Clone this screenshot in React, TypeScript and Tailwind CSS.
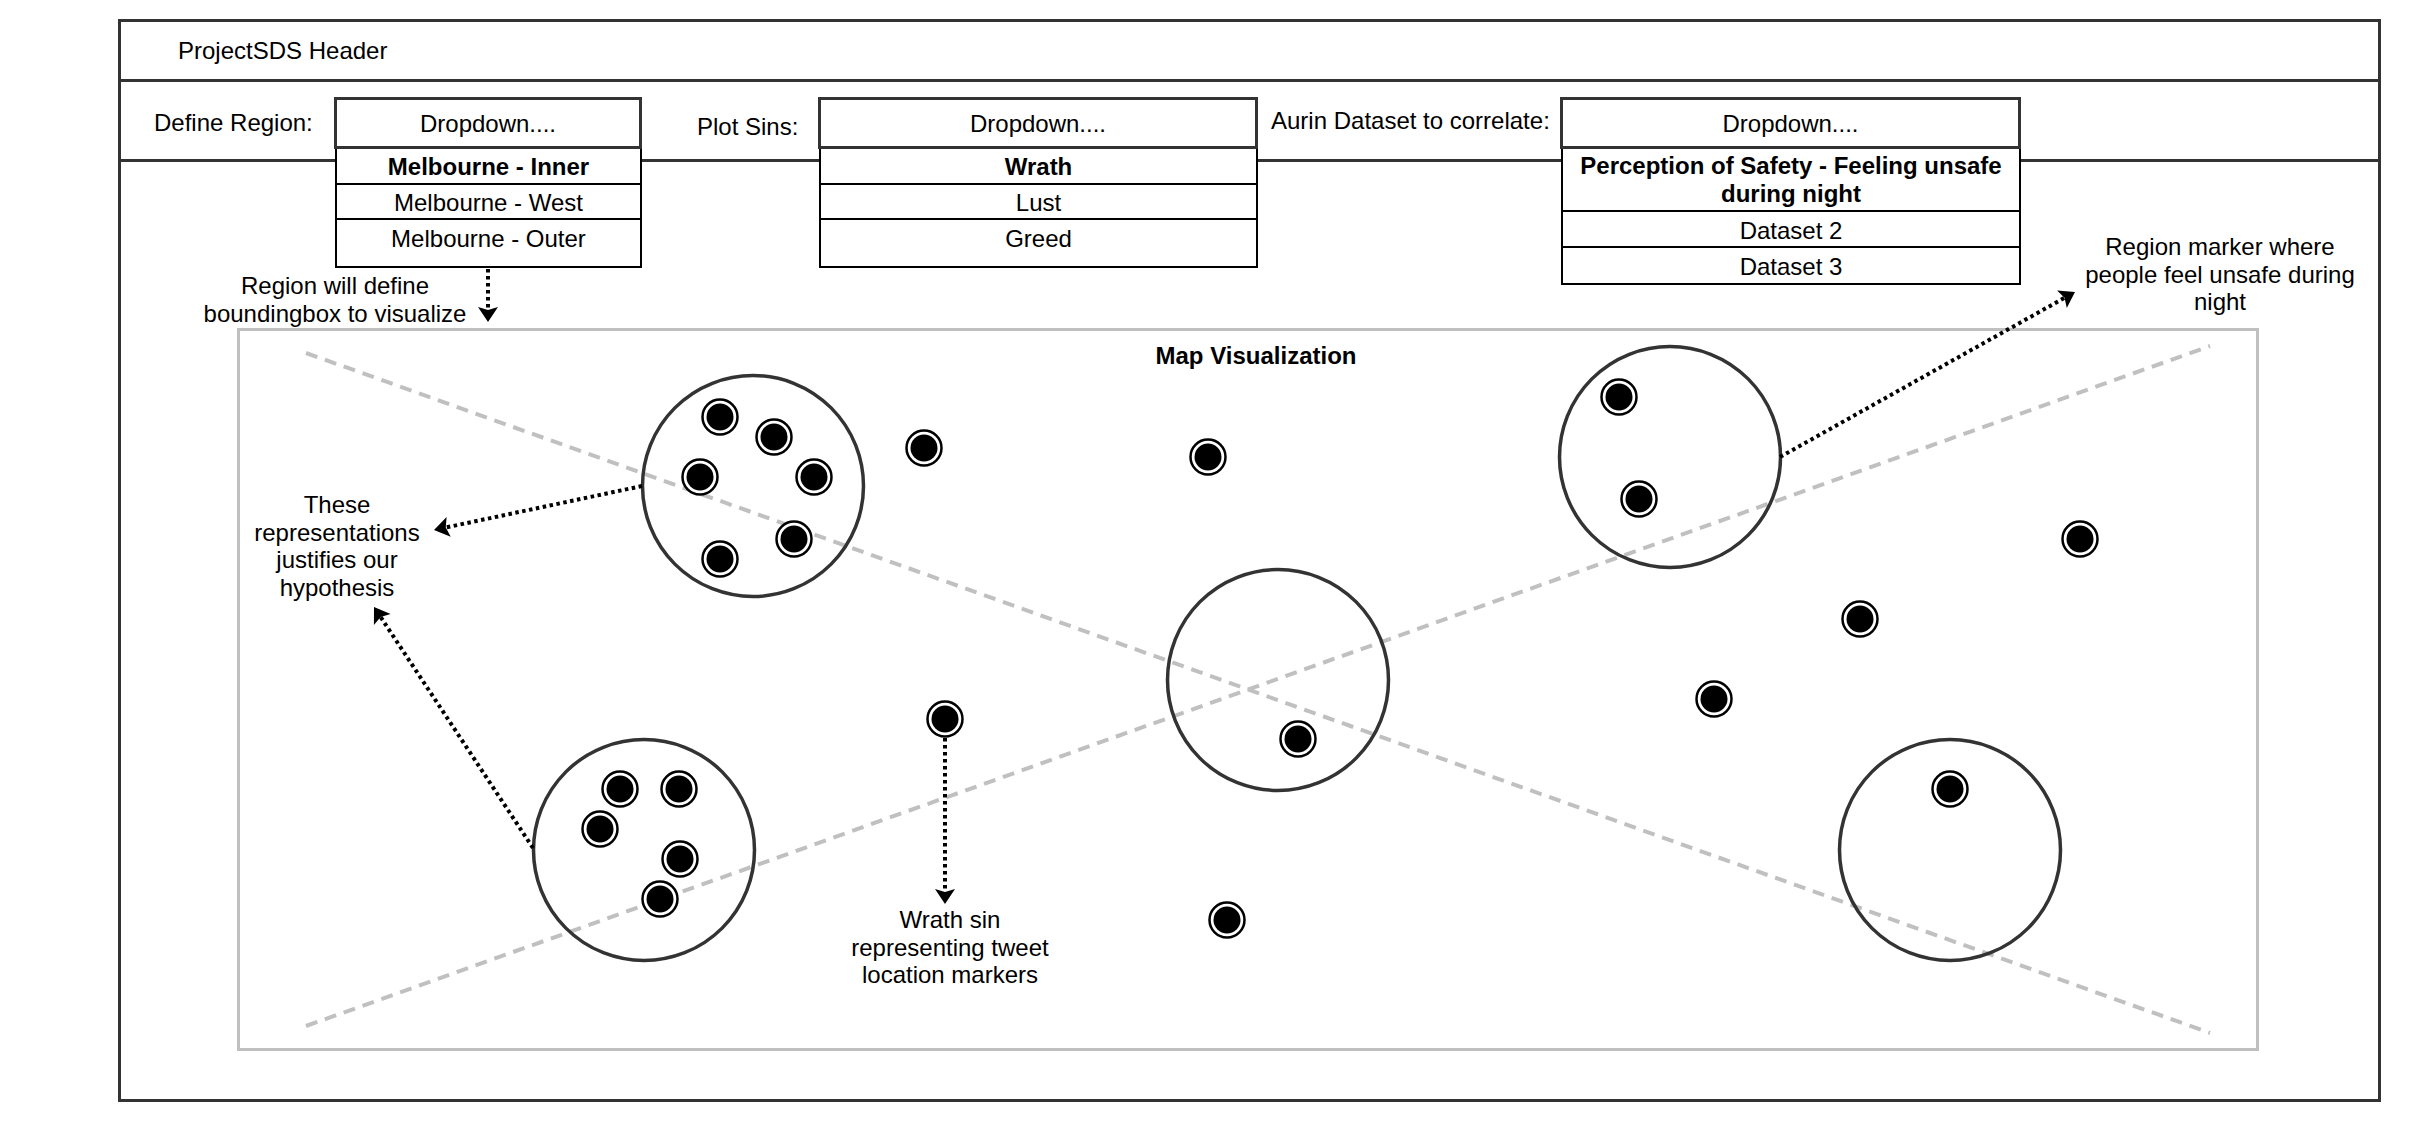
const markers: [number, number][] = [
  // inner cluster
  [720, 417], [774, 437], [700, 477], [814, 477], [720, 559], [794, 539],
  // lower left cluster
  [620, 789], [679, 789], [600, 829], [680, 859], [660, 899],
  // scattered tweets
  [924, 448], [1208, 457], [945, 719], [1227, 920], [1298, 739],
  [1619, 397], [1639, 499], [2080, 539], [1860, 619], [1714, 699], [1950, 789],
];

const regions: [number, number][] = [
  [753, 486], [644, 850], [1278, 680], [1670, 457], [1950, 850],
];

const arrows: [number, number, number, number][] = [
  [488, 269, 488, 322],
  [642, 486, 434, 530],
  [533, 848, 374, 607],
  [945, 738, 945, 904],
  [1780, 457, 2075, 292],
];

function Arrow({ x1, y1, x2, y2 }: { x1: number; y1: number; x2: number; y2: number }) {
  const len = Math.hypot(x2 - x1, y2 - y1);
  const ux = (x2 - x1) / len;
  const uy = (y2 - y1) / len;
  const px = -uy;
  const py = ux;
  const head = 15;
  const half = 10;
  const bx = x2 - ux * head;
  const by = y2 - uy * head;
  const nx = x2 - ux * (head - 3);
  const ny = y2 - uy * (head - 3);
  const pts = [
    [x2, y2],
    [bx + px * half, by + py * half],
    [nx, ny],
    [bx - px * half, by - py * half],
  ]
    .map((p) => p.join(','))
    .join(' ');
  return (
    <g>
      <line x1={x1} y1={y1} x2={nx} y2={ny} stroke="#000" strokeWidth={4} strokeDasharray="3.5 3.5" />
      <polygon points={pts} fill="#000" />
    </g>
  );
}

function Dropdown({ width, rows }: { width: string; rows: { label: React.ReactNode; cls: string }[] }) {
  return (
    <div className={`relative mt-[15px] ${width}`}>
      <div className="h-[52px] border-[3px] border-[#333] pt-[2px] flex items-center justify-center text-[24px] leading-[28px]">
        Dropdown....
      </div>
      <div className="absolute top-full left-[1px] right-0 border-x-2 border-b-2 border-black bg-white z-10">
        {rows.map((r, i) => (
          <div key={i} className={`text-center text-[24px] leading-[28px] ${r.cls}`}>
            {r.label}
          </div>
        ))}
      </div>
    </div>
  );
}

export default function App() {
  return (
    <div className="relative w-[2420px] h-[1140px] bg-white text-black font-['Liberation_Sans',Arial,sans-serif] overflow-hidden pt-[19px] pl-[118px]">
      <div className="w-[2263px] h-[1083px] border-[3px] border-[#333] flex flex-col">
        {/* Header */}
        <div className="h-[60px] shrink-0 border-b-[3px] border-[#333] flex items-center pl-[57px] text-[24px]">
          ProjectSDS Header
        </div>

        {/* Filters */}
        <div className="h-[80px] shrink-0 border-b-[3px] border-[#333] flex items-start pl-[33px] text-[24px] leading-[28px]">
          <div className="w-[180px] mt-[27px]">Define Region:</div>
          <Dropdown
            width="w-[308px]"
            rows={[
              { label: 'Melbourne - Inner', cls: 'font-bold h-[36px] pt-[4px] border-b-2 border-black' },
              { label: 'Melbourne - West', cls: 'h-[35px] pt-[4px] border-b-2 border-black' },
              { label: 'Melbourne - Outer', cls: 'h-[46px] pt-[5px]' },
            ]}
          />
          <div className="ml-[55px] w-[121px] mt-[31px]">Plot Sins:</div>
          <Dropdown
            width="w-[440px]"
            rows={[
              { label: 'Wrath', cls: 'font-bold h-[36px] pt-[4px] border-b-2 border-black' },
              { label: 'Lust', cls: 'h-[35px] pt-[4px] border-b-2 border-black' },
              { label: 'Greed', cls: 'h-[46px] pt-[5px]' },
            ]}
          />
          <div className="ml-[13px] w-[289px] mt-[25px] whitespace-nowrap">Aurin Dataset to correlate:</div>
          <Dropdown
            width="w-[461px]"
            rows={[
              {
                label: (
                  <>
                    Perception of Safety - Feeling unsafe
                    <br />
                    during night
                  </>
                ),
                cls: 'font-bold h-[63px] pt-[3px] border-b-2 border-black',
              },
              { label: 'Dataset 2', cls: 'h-[36px] pt-[5px] border-b-2 border-black' },
              { label: 'Dataset 3', cls: 'h-[35px] pt-[5px]' },
            ]}
          />
        </div>

        {/* Map */}
        <div className="pl-[116px] pt-[166px]">
          <div className="w-[2022px] h-[723px] border-[3px] border-[#c0c0c0] pt-[11px] pl-[16px] text-center text-[24px] leading-[28px] font-bold">
            Map Visualization
          </div>
        </div>
      </div>

      {/* Diagram drawing */}
      <svg className="absolute top-0 left-0 pointer-events-none" width={2420} height={1140} viewBox="0 0 2420 1140">
        <line x1={306} y1={353} x2={2210} y2={1033} stroke="#c0c0c0" strokeWidth={4} strokeDasharray="12 8" />
        <line x1={306} y1={1026} x2={2210} y2={346} stroke="#c0c0c0" strokeWidth={4} strokeDasharray="12 8" />
        {regions.map(([cx, cy], i) => (
          <circle key={i} cx={cx} cy={cy} r={110.5} fill="none" stroke="#333" strokeWidth={3.5} />
        ))}
        {markers.map(([cx, cy], i) => (
          <g key={i}>
            <circle cx={cx} cy={cy} r={17.5} fill="#fff" stroke="#000" strokeWidth={2.5} />
            <circle cx={cx} cy={cy} r={13.5} fill="#000" />
          </g>
        ))}
        {arrows.map(([x1, y1, x2, y2], i) => (
          <Arrow key={i} x1={x1} y1={y1} x2={x2} y2={y2} />
        ))}
      </svg>

      {/* Annotations */}
      <div className="absolute left-[335px] top-[272px] -translate-x-1/2 text-center text-[24px] leading-[27.5px] whitespace-nowrap">
        Region will define
        <br />
        boundingbox to visualize
      </div>
      <div className="absolute left-[337px] top-[491px] -translate-x-1/2 text-center text-[24px] leading-[27.5px] whitespace-nowrap">
        These
        <br />
        representations
        <br />
        justifies our
        <br />
        hypothesis
      </div>
      <div className="absolute left-[2220px] top-[233px] -translate-x-1/2 text-center text-[24px] leading-[27.5px] whitespace-nowrap">
        Region marker where
        <br />
        people feel unsafe during
        <br />
        night
      </div>
      <div className="absolute left-[950px] top-[906px] -translate-x-1/2 text-center text-[24px] leading-[27.5px] whitespace-nowrap">
        Wrath sin
        <br />
        representing tweet
        <br />
        location markers
      </div>
    </div>
  );
}
